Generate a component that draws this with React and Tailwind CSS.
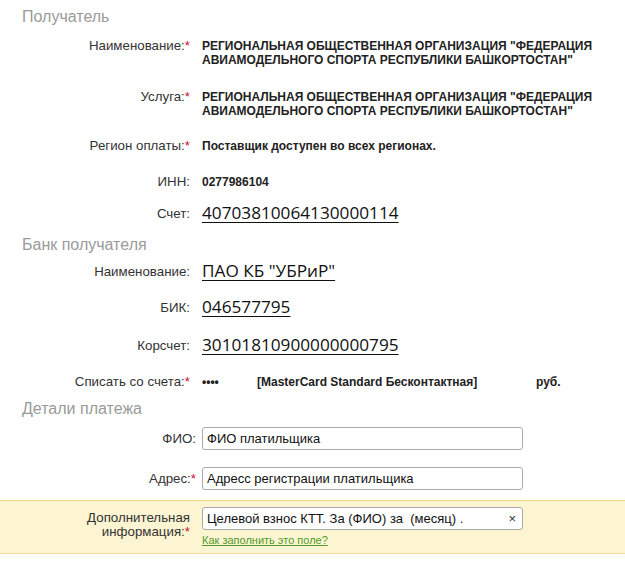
import React from "react";

const ORG = 'РЕГИОНАЛЬНАЯ ОБЩЕСТВЕННАЯ ОРГАНИЗАЦИЯ "ФЕДЕРАЦИЯ АВИАМОДЕЛЬНОГО СПОРТА РЕСПУБЛИКИ БАШКОРТОСТАН"';

/** Подпись поля + значение */
function Row({ label, req, className = "", labelW = "w-[190px]", gap = "ml-[12px]", children, center }) {
  return (
    <div className={`flex ${center ? "items-center" : "items-start"} ${className}`}>
      <div className={`${labelW} shrink-0 text-right text-[13.3px] leading-[14px] text-[#333]`}>
        {label}
        {req && <span className="text-[#c8102e]">*</span>}
      </div>
      <div className={gap}>{children}</div>
    </div>
  );
}

function Section({ title, className = "" }) {
  return (
    <div className={`pl-[22px] text-[16px] leading-[18px] text-[#9a9a9a] ${className}`}>{title}</div>
  );
}

function Big({ children }) {
  return (
    <span className="font-['Open_Sans',sans-serif] text-[17.2px] leading-[22px] text-[#111] underline decoration-1 underline-offset-[3px]">
      {children}
    </span>
  );
}

function Field({ value, clear }) {
  return (
    <div className="flex h-[23px] w-[321px] items-center justify-between rounded-[3px] border border-[#a9a9a9] bg-white pl-[4px] pr-[6px] text-[13px] text-[#111]">
      <span className="whitespace-pre">{value}</span>
      {clear && <span className="text-[13px] text-[#333]">×</span>}
    </div>
  );
}

export default function App() {
  return (
    <div className="h-[563px] w-[625px] overflow-hidden bg-white pt-[8px] font-['Liberation_Sans',Arial,sans-serif]">
      <Section title="Получатель" />

      <Row label="Наименование:" req className="mt-[13px]">
        <div className="w-[410px] text-[12px] font-bold leading-[14px] text-[#222]">{ORG}</div>
      </Row>
      <Row label="Услуга:" req className="mt-[23px]">
        <div className="w-[410px] text-[12px] font-bold leading-[14px] text-[#222]">{ORG}</div>
      </Row>
      <Row label="Регион оплаты:" req className="mt-[21px]">
        <div className="text-[12px] font-bold leading-[14px] text-[#222]">Поставщик доступен во всех регионах.</div>
      </Row>
      <Row label="ИНН:" className="mt-[22px]">
        <div className="text-[12px] font-bold leading-[14px] text-[#222]">0277986104</div>
      </Row>
      <Row label="Счет:" center className="mt-[14px] h-[22px]">
        <Big>40703810064130000114</Big>
      </Row>

      <Section title="Банк получателя" className="mt-[11px]" />

      <Row label="Наименование:" center className="mt-[7px] h-[22px]">
        <Big>ПАО КБ "УБРиР"</Big>
      </Row>
      <Row label="БИК:" center className="mt-[14px] h-[22px]">
        <Big>046577795</Big>
      </Row>
      <Row label="Корсчет:" center className="mt-[16px] h-[22px]">
        <Big>30101810900000000795</Big>
      </Row>
      <Row label="Списать со счета:" req className="mt-[18px]">
        <div className="flex text-[12px] font-bold leading-[14px] text-[#222]">
          <span className="w-[55px]">••••</span>
          <span className="w-[279px]">[MasterCard Standard Бесконтактная]</span>
          <span>руб.</span>
        </div>
      </Row>

      <Section title="Детали платежа" className="mt-[11px]" />

      <Row label="ФИО:" center labelW="w-[196px]" gap="ml-[6px]" className="mt-[9px] h-[23px]">
        <Field value="ФИО платильщика" />
      </Row>
      <Row label="Адрес:" req center labelW="w-[196px]" gap="ml-[6px]" className="mt-[17px] h-[23px]">
        <Field value="Адресс регистрации платильщика" />
      </Row>

      <div className="mt-[10px] border-y border-[#eedb8c] bg-[#fdf5d2] pt-[6px] pb-[6px]">
        <div className="flex items-start">
          <div className="mt-[4px] w-[190px] shrink-0 text-right text-[13.3px] leading-[14px] text-[#333]">
            Дополнительная
            <br />
            информация:<span className="text-[#c8102e]">*</span>
          </div>
          <div className="ml-[12px]">
            <Field value="Целевой взнос КТТ. За (ФИО) за  (месяц) ." clear />
            <a href="#" className="mt-[4px] block text-[11px] leading-[13px] text-[#4f9a2a] underline">
              Как заполнить это поле?
            </a>
          </div>
        </div>
      </div>
    </div>
  );
}
